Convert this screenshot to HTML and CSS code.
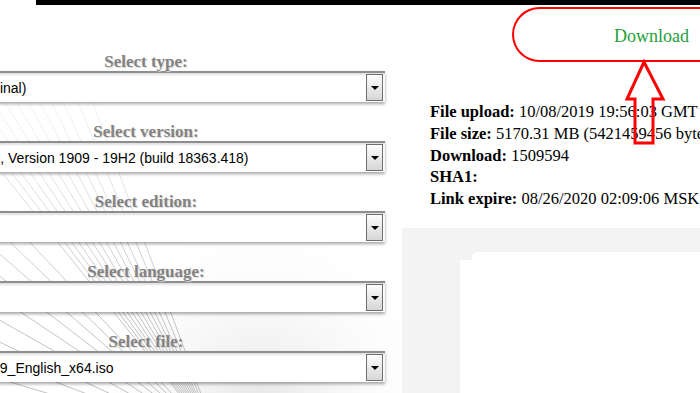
FILE: index.html
```html
<!DOCTYPE html>
<html lang="en">
<head>
    <meta charset="UTF-8">
    <meta name="viewport" content="width=device-width, initial-scale=1.0">
    <title>Download</title>
    <link rel="stylesheet" href="styles.css">
</head>
<body>
    <div class="topbar"></div>
    <div class="page">
        <svg class="lines" width="400" height="388" viewBox="0 0 400 388">
            <defs>
                <linearGradient id="fade" gradientUnits="userSpaceOnUse" x1="0" y1="90" x2="0" y2="300">
                    <stop offset="0" stop-color="#c4c4c4" stop-opacity="0.2"/>
                    <stop offset="1" stop-color="#b4b4b4" stop-opacity="1"/>
                </linearGradient>
                <radialGradient id="haze" cx="260" cy="400" r="200" gradientUnits="userSpaceOnUse">
                    <stop offset="0" stop-color="#e6e6e6"/>
                    <stop offset="1" stop-color="#ffffff" stop-opacity="0"/>
                </radialGradient>
            </defs>
            <rect x="0" y="200" width="400" height="188" fill="url(#haze)"/>
            <g stroke="url(#fade)" stroke-width="0.8" fill="none">
                <line x1="-60" y1="90" x2="220" y2="440"/>
                <line x1="-48" y1="90" x2="220" y2="440"/>
                <line x1="-36" y1="90" x2="220" y2="440"/>
                <line x1="-24" y1="90" x2="220" y2="440"/>
                <line x1="-12" y1="90" x2="220" y2="440"/>
                <line x1="0" y1="90" x2="220" y2="440"/>
                <line x1="12" y1="90" x2="220" y2="440"/>
                <line x1="24" y1="90" x2="220" y2="440"/>
                <line x1="36" y1="90" x2="220" y2="440"/>
                <line x1="48" y1="90" x2="220" y2="440"/>
                <line x1="60" y1="90" x2="220" y2="440"/>
                <line x1="75" y1="90" x2="220" y2="440"/>
                <line x1="90" y1="90" x2="220" y2="440"/>
                <line x1="-80" y1="120" x2="220" y2="440"/>
                <line x1="-80" y1="150" x2="220" y2="440"/>
                <line x1="-80" y1="180" x2="220" y2="440"/>
                <line x1="-80" y1="210" x2="220" y2="440"/>
                <line x1="-80" y1="240" x2="220" y2="440"/>
                <line x1="-80" y1="270" x2="220" y2="440"/>
                <line x1="-80" y1="300" x2="220" y2="440"/>
                <line x1="-80" y1="325" x2="220" y2="440"/>
                <line x1="-80" y1="350" x2="220" y2="440"/>
                <line x1="-80" y1="375" x2="220" y2="440"/>
            </g>
        </svg>

        <div class="selects">
            <div class="field">
                <div class="label">Select type:</div>
                <div class="select"><span class="value type">Windows (Final)</span><span class="drop"></span></div>
            </div>
            <div class="field">
                <div class="label">Select version:</div>
                <div class="select"><span class="value">Windows 10, Version 1909 - 19H2 (build 18363.418)</span><span class="drop"></span></div>
            </div>
            <div class="field">
                <div class="label">Select edition:</div>
                <div class="select"><span class="value"></span><span class="drop"></span></div>
            </div>
            <div class="field">
                <div class="label">Select language:</div>
                <div class="select"><span class="value"></span><span class="drop"></span></div>
            </div>
            <div class="field">
                <div class="label">Select file:</div>
                <div class="select"><span class="value file">Win10_1909_English_x64.iso</span><span class="drop"></span></div>
            </div>
        </div>

        <div class="side">
            <div class="download">Download</div>
            <div class="info">
                <p><b>File upload:</b> 10/08/2019 19:56:03 GMT</p>
                <p><b>File size:</b> 5170.31 MB (5421459456 bytes)</p>
                <p><b>Download:</b> 1509594</p>
                <p><b>SHA1:</b></p>
                <p><b>Link expire:</b> 08/26/2020 02:09:06 MSK</p>
            </div>
            <div class="panel">
                <div class="panel-inner"></div>
            </div>
        </div>

        <svg class="pointer" width="50" height="95" viewBox="0 0 50 95">
            <path d="M24 5 L7 42 L15 42 L15 86 L33 86 L33 42 L43 42 Z" fill="none" stroke="#f00" stroke-width="3"/>
        </svg>
    </div>
</body>
</html>
```

FILE: styles.css
```css
body {
    margin: 0;
    padding: 0;
    background: #fff;
    overflow: hidden;
    height: 393px;
}

.topbar {
    height: 5px;
    margin-left: 36px;
    background: #000;
}

.page {
    position: relative;
    display: flex;
    height: 388px;
}

.lines {
    position: absolute;
    left: 0;
    top: 0;
    z-index: 0;
}

.selects {
    position: relative;
    z-index: 1;
    flex-shrink: 0;
    width: 478px;
    margin-left: -93px;
    padding-top: 48px;
}

.field {
    margin-bottom: 21px;
}

.label {
    text-align: center;
    font: bold 17px/18px "Liberation Serif", serif;
    color: #838383;
    text-shadow: 1px 1px 1px #d8d8d8;
}

.select {
    display: flex;
    align-items: center;
    height: 31px;
    box-sizing: border-box;
    background: #fff;
    border-top: 2px solid #8e8e8e;
    box-shadow: 0 2px 3px rgba(0, 0, 0, 0.35), inset 0 2px 2px rgba(0, 0, 0, 0.12);
    font: 14px "Liberation Sans", Arial, sans-serif;
    color: #000;
}

.value {
    flex: 1;
    padding-left: 17px;
    white-space: nowrap;
    overflow: hidden;
}

.value.type {
    padding-left: 19px;
}

.value.file {
    padding-left: 22px;
}

.drop {
    display: flex;
    align-items: center;
    justify-content: center;
    width: 17px;
    height: 27px;
    box-sizing: border-box;
    margin-right: 2px;
    border: 1px solid #6e6e6e;
    background: linear-gradient(#fdfdfd, #d6d6d6);
}

.drop::after {
    content: "";
    border-left: 4px solid transparent;
    border-right: 4px solid transparent;
    border-top: 4px solid #000;
}

.side {
    position: relative;
    z-index: 1;
    flex: 1;
    min-width: 0;
}

.download {
    width: 260px;
    height: 55px;
    box-sizing: border-box;
    margin: 2px 0 0 127px;
    padding: 3px 0 0 100px;
    border: 2px solid #f00;
    border-right: none;
    border-radius: 28px 0 0 28px;
    background: #fff;
    color: #1c9f3a;
    font: 18px/48px "Liberation Serif", serif;
}

.info {
    margin: 39px 0 0 45px;
    font: 16.5px/21.75px "Liberation Serif", serif;
    color: #000;
    white-space: nowrap;
}

.info p {
    margin: 0;
}

.panel {
    height: 170px;
    margin: 18px 0 0 17px;
    padding: 24px 0 0 58px;
    box-sizing: border-box;
    background: #f3f3f3;
}

.panel-inner {
    position: relative;
    height: 200px;
    margin-top: 8px;
    background: #fff;
}

.panel-inner::before {
    content: "";
    position: absolute;
    left: 12px;
    right: 0;
    top: -8px;
    height: 8px;
    background: #fff;
    border-top-left-radius: 6px;
}

.pointer {
    position: absolute;
    left: 620px;
    top: 52px;
    z-index: 2;
}
```
